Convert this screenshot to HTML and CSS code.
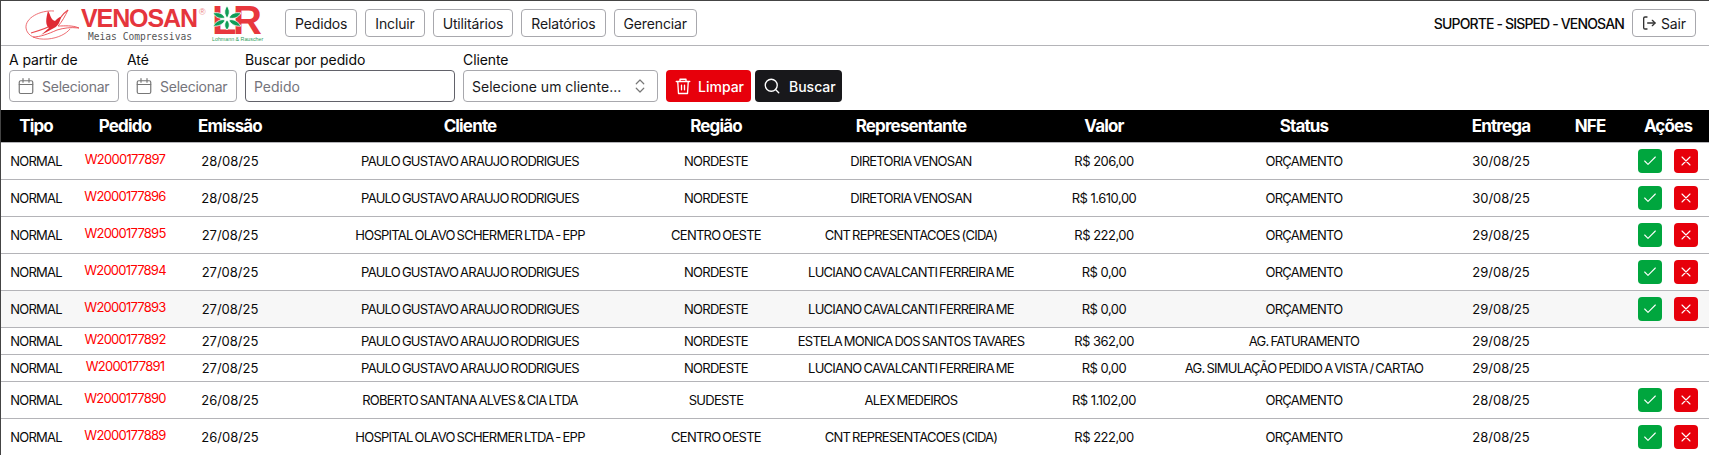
FILE: index.html
```html
<!DOCTYPE html>
<html lang="pt-BR">
<head>
    <meta charset="UTF-8">
    <title>Pedidos</title>
    <link rel="stylesheet" href="styles.css">
</head>
<body>
    <header class="topbar">
        <div class="logo-venosan">
            <svg class="bird" width="56" height="36" viewBox="0 0 56 36" fill="none" stroke="#ea4a50">
                <path d="M2 22 C1 12 16 4 30 5 M2 22 C3 30 12 34 24 33 C34 32 42 28 46 23" stroke-width="0.8"/>
                <path d="M7 27 C14 25 24 22 32 17 C36 13 38 8 44 4" stroke-width="1.2"/>
                <path d="M44 4 C41 10 38 16 34 20 C41 20 48 19 55 22 C46 21 40 22 33 24 C24 28 16 31 9 31" stroke-width="0.9"/>
                <path d="M24 5 C27 9 26 13 31 15 C33 13 35 11 37 11 C36 16 34 20 30 22 L17 29 L25 22 C21 19 22 12 24 5 Z" fill="#df2a33" stroke="none"/>
            </svg>
            <div class="logo-text">
                <span class="logo-name">VENOSAN<sup>®</sup></span>
                <span class="logo-sub">Meias Compressivas</span>
            </div>
        </div>
        <div class="logo-lr">
            <div class="lr-letters"><span class="lr-l">L</span><span>R</span></div>
            <span class="lr-small">Lohmann &amp; Rauscher</span>
            <svg class="lr-leaves" width="30" height="26" viewBox="0 0 30 26" fill="#0f9d58" stroke="#fff" stroke-width="0.8">
                <path d="M1 8 C6 7 11 8 13 13 C8 14 4 13 1 8 Z"/>
                <path d="M1 21 C5 15 10 14 13 15 C12 19 6 22 1 21 Z"/>
                <path d="M29 8 C24 7 19 8 17 13 C22 14 26 13 29 8 Z"/>
                <path d="M29 21 C25 15 20 14 17 15 C18 19 24 22 29 21 Z"/>
                <path d="M15 1 C12 5 12 9 15 13 C18 9 18 5 15 1 Z"/>
                <path d="M15 25 C12 22 12 18 15 15 C18 18 18 22 15 25 Z"/>
            </svg>
        </div>
        <nav class="menu">
            <button class="btn-outline">Pedidos</button>
            <button class="btn-outline">Incluir</button>
            <button class="btn-outline">Utilitários</button>
            <button class="btn-outline">Relatórios</button>
            <button class="btn-outline">Gerenciar</button>
        </nav>
        <div class="user">
            <span class="user-name">SUPORTE - SISPED - VENOSAN</span>
            <button class="btn-outline btn-sair">
                <svg width="16" height="16" viewBox="0 0 24 24" fill="none" stroke="#333" stroke-width="2" stroke-linecap="round" stroke-linejoin="round"><path d="M9 3H6a2 2 0 0 0-2 2v14a2 2 0 0 0 2 2h3"/><path d="M10 12h11"/><path d="M17 8l4 4-4 4"/></svg>
                Sair
            </button>
        </div>
    </header>

    <section class="filters">
        <div class="field">
            <label>A partir de</label>
            <div class="input date">
                <svg width="18" height="18" viewBox="0 0 24 24" fill="none" stroke="#777" stroke-width="1.6" stroke-linecap="round"><rect x="3" y="5" width="18" height="17" rx="2"/><path d="M8 2v5M16 2v5M3 10h18"/></svg>
                <span>Selecionar</span>
            </div>
        </div>
        <div class="field">
            <label>Até</label>
            <div class="input date">
                <svg width="18" height="18" viewBox="0 0 24 24" fill="none" stroke="#777" stroke-width="1.6" stroke-linecap="round"><rect x="3" y="5" width="18" height="17" rx="2"/><path d="M8 2v5M16 2v5M3 10h18"/></svg>
                <span>Selecionar</span>
            </div>
        </div>
        <div class="field">
            <label>Buscar por pedido</label>
            <div class="input pedido"><span>Pedido</span></div>
        </div>
        <div class="field">
            <label>Cliente</label>
            <div class="input cliente">
                <span>Selecione um cliente...</span>
                <svg width="18" height="18" viewBox="0 0 24 24" fill="none" stroke="#777" stroke-width="1.6" stroke-linecap="round" stroke-linejoin="round"><path d="M7 9l5-5 5 5M7 15l5 5 5-5"/></svg>
            </div>
        </div>
        <button class="btn-action red">
            <svg width="18" height="18" viewBox="0 0 24 24" fill="none" stroke="#fff" stroke-width="1.8" stroke-linecap="round" stroke-linejoin="round"><path d="M3 6h18M8 6V3h8v3M5 6l1 16h12l1-16M10 11v6M14 11v6"/></svg>
            Limpar
        </button>
        <button class="btn-action dark">
            <svg width="18" height="18" viewBox="0 0 24 24" fill="none" stroke="#fff" stroke-width="1.8" stroke-linecap="round"><circle cx="11" cy="11" r="8"/><path d="M21 21l-4.3-4.3"/></svg>
            Buscar
        </button>
    </section>

    <table class="grid">
        <colgroup>
            <col class="c-tipo"><col class="c-pedido"><col class="c-emissao"><col class="c-cliente"><col class="c-regiao"><col class="c-rep"><col class="c-valor"><col class="c-status"><col class="c-entrega"><col class="c-nfe"><col class="c-acoes">
        </colgroup>
        <thead>
            <tr><th>Tipo</th><th>Pedido</th><th>Emissão</th><th>Cliente</th><th>Região</th><th>Representante</th><th>Valor</th><th>Status</th><th>Entrega</th><th>NFE</th><th>Ações</th></tr>
        </thead>
        <tbody id="rows"></tbody>
    </table>

    <script src="script.js"></script>
</body>
</html>
```

FILE: script.js
```js
const pedidos = [
    ["W2000177897", "28/08/25", "PAULO GUSTAVO ARAUJO RODRIGUES", "NORDESTE", "DIRETORIA VENOSAN", "R$ 206,00", "ORÇAMENTO", "30/08/25", true],
    ["W2000177896", "28/08/25", "PAULO GUSTAVO ARAUJO RODRIGUES", "NORDESTE", "DIRETORIA VENOSAN", "R$ 1.610,00", "ORÇAMENTO", "30/08/25", true],
    ["W2000177895", "27/08/25", "HOSPITAL OLAVO SCHERMER LTDA - EPP", "CENTRO OESTE", "CNT REPRESENTACOES (CIDA)", "R$ 222,00", "ORÇAMENTO", "29/08/25", true],
    ["W2000177894", "27/08/25", "PAULO GUSTAVO ARAUJO RODRIGUES", "NORDESTE", "LUCIANO CAVALCANTI FERREIRA ME", "R$ 0,00", "ORÇAMENTO", "29/08/25", true],
    ["W2000177893", "27/08/25", "PAULO GUSTAVO ARAUJO RODRIGUES", "NORDESTE", "LUCIANO CAVALCANTI FERREIRA ME", "R$ 0,00", "ORÇAMENTO", "29/08/25", true],
    ["W2000177892", "27/08/25", "PAULO GUSTAVO ARAUJO RODRIGUES", "NORDESTE", "ESTELA MONICA DOS SANTOS TAVARES", "R$ 362,00", "AG. FATURAMENTO", "29/08/25", false],
    ["W2000177891", "27/08/25", "PAULO GUSTAVO ARAUJO RODRIGUES", "NORDESTE", "LUCIANO CAVALCANTI FERREIRA ME", "R$ 0,00", "AG. SIMULAÇÃO PEDIDO A VISTA / CARTAO", "29/08/25", false],
    ["W2000177890", "26/08/25", "ROBERTO SANTANA ALVES & CIA LTDA", "SUDESTE", "ALEX MEDEIROS", "R$ 1.102,00", "ORÇAMENTO", "28/08/25", true],
    ["W2000177889", "26/08/25", "HOSPITAL OLAVO SCHERMER LTDA - EPP", "CENTRO OESTE", "CNT REPRESENTACOES (CIDA)", "R$ 222,00", "ORÇAMENTO", "28/08/25", true]
];

const iconOk = '<svg width="16" height="16" viewBox="0 0 24 24" fill="none" stroke="#fff" stroke-width="1.6" stroke-linecap="round" stroke-linejoin="round"><path d="M20 6L9 17l-5-5"/></svg>';
const iconNo = '<svg width="16" height="16" viewBox="0 0 24 24" fill="none" stroke="#fff" stroke-width="1.6" stroke-linecap="round" stroke-linejoin="round"><path d="M18 6L6 18M6 6l12 12"/></svg>';

let html = "";
pedidos.forEach(function (p, i) {
    let acoes = "";
    if (p[8]) {
        acoes = '<div class="acoes"><button class="mini green">' + iconOk + '</button><button class="mini red">' + iconNo + '</button></div>';
    }
    html += '<tr class="' + (i === 4 ? "hover" : "") + '">'
        + "<td>NORMAL</td>"
        + '<td><a class="link">' + p[0] + "</a></td>"
        + "<td class=\"data\">" + p[1] + "</td>"
        + "<td>" + p[2].replace("&", "&amp;") + "</td>"
        + "<td>" + p[3] + "</td>"
        + "<td>" + p[4] + "</td>"
        + "<td class=\"valor\">" + p[5] + "</td>"
        + "<td>" + p[6] + "</td>"
        + "<td class=\"data\">" + p[7] + "</td>"
        + "<td></td>"
        + "<td>" + acoes + "</td>"
        + "</tr>";
});
document.getElementById("rows").innerHTML = html;
```

FILE: styles.css
```css
* {
    box-sizing: border-box;
}

body {
    margin: 0;
    font-family: Inter, "Noto Sans", sans-serif;
    color: #0a0a0a;
    background: #fff;
    border-top: 1px solid #444;
    border-left: 1px solid #444;
}

button {
    font-family: inherit;
    cursor: pointer;
}

svg {
    flex-shrink: 0;
}

.topbar {
    height: 45px;
    display: flex;
    align-items: center;
    padding: 0 13px 0 23px;
    border-bottom: 1px solid #b4b4b8;
}

.logo-venosan {
    display: flex;
    align-items: flex-start;
    width: 188px;
    height: 40px;
    padding-top: 3px;
}

.logo-text {
    display: flex;
    flex-direction: column;
    align-items: flex-start;
    margin-left: 1px;
}

.logo-name {
    font-family: "Liberation Sans", sans-serif;
    font-weight: 700;
    font-size: 25px;
    line-height: 25px;
    letter-spacing: -1.1px;
    color: #e5353c;
    white-space: nowrap;
}

.logo-name sup {
    font-size: 9px;
    font-weight: 400;
    line-height: 0;
    letter-spacing: 0;
    vertical-align: 12px;
    margin-left: 2px;
    color: #e88;
}

.logo-sub {
    font-family: "DejaVu Sans Mono", monospace;
    font-size: 9.6px;
    line-height: 11px;
    color: #555;
    margin-left: 7px;
    white-space: nowrap;
}

.logo-lr {
    position: relative;
    width: 50px;
    height: 36px;
    padding-top: 1px;
    margin-right: 23px;
}

.lr-letters {
    display: flex;
    height: 29px;
    font-family: "Liberation Sans", sans-serif;
    font-weight: 700;
    font-size: 40px;
    line-height: 29px;
    color: #e8373d;
}

.lr-l {
    width: 21px;
}

.lr-small {
    display: block;
    margin-top: 2px;
    font-family: "Liberation Sans", sans-serif;
    font-size: 5.3px;
    line-height: 5px;
    color: #2a9d5a;
    white-space: nowrap;
}

.lr-leaves {
    position: absolute;
    top: 0;
    left: 0;
}

.menu {
    display: flex;
    gap: 8px;
}

.btn-outline {
    height: 28px;
    padding: 0 9px;
    background: #fff;
    border: 1px solid #a8a8ad;
    border-radius: 4px;
    font-size: 14px;
    letter-spacing: -0.15px;
    color: #18181b;
    display: flex;
    align-items: center;
    gap: 4px;
}

.user {
    margin-left: auto;
    display: flex;
    align-items: center;
    gap: 8px;
}

.user-name {
    font-size: 14px;
    font-weight: 500;
    letter-spacing: -0.85px;
}

.btn-sair {
    width: 64px;
    padding: 0 8px;
}

.filters {
    display: flex;
    align-items: flex-end;
    gap: 8px;
    padding: 0 8px 8px;
    height: 64px;
}

.field {
    display: flex;
    flex-direction: column;
    gap: 2px;
}

.field label {
    font-size: 14px;
    line-height: 17px;
    letter-spacing: -0.1px;
}

.input {
    height: 32px;
    border: 1px solid #a8a8ad;
    border-radius: 4px;
    display: flex;
    align-items: center;
    font-size: 14px;
    color: #74747b;
    padding: 0 8px;
}

.date {
    width: 110px;
    padding: 0 7px;
    gap: 7px;
    letter-spacing: -0.25px;
}

.pedido {
    width: 210px;
    border-color: #62626a;
}

.cliente {
    width: 195px;
    color: #18181b;
    justify-content: space-between;
}

.btn-action {
    height: 32px;
    border: none;
    border-radius: 4px;
    color: #fff;
    font-size: 14px;
    font-weight: 500;
    display: flex;
    align-items: center;
    gap: 8px;
    padding: 0 8px;
}

.btn-action.red {
    width: 85px;
    gap: 6px;
    background: #e7000b;
}

.btn-action.dark {
    width: 87px;
    background: #18181b;
    margin-left: -4px;
}

.grid {
    width: 1708px;
    table-layout: fixed;
    border-collapse: collapse;
}

.c-tipo { width: 70px; }
.c-pedido { width: 108px; }
.c-emissao { width: 102px; }
.c-cliente { width: 378px; }
.c-regiao { width: 114px; }
.c-rep { width: 276px; }
.c-valor { width: 110px; }
.c-status { width: 290px; }
.c-entrega { width: 104px; }
.c-nfe { width: 74px; }
.c-acoes { width: 82px; }

.grid th {
    height: 32px;
    padding: 0;
    background: #000;
    color: #fff;
    font-size: 17px;
    font-weight: 700;
    letter-spacing: -0.85px;
    text-align: center;
}

.grid td {
    padding: 0;
    font-size: 13px;
    letter-spacing: -0.75px;
    word-spacing: -1px;
    text-align: center;
    color: #0a0a0a;
    border-top: 1px solid #b4b4b8;
    height: 27px;
}

.grid td.data {
    letter-spacing: 0;
}

.grid td.valor {
    letter-spacing: -0.5px;
    word-spacing: 0;
}

.grid tr.hover td {
    background: #f7f7f7;
}

.link {
    display: inline-block;
    padding-bottom: 4px;
    color: #f00;
}

.acoes {
    display: flex;
    justify-content: center;
    gap: 12px;
    padding: 6px 0;
}

.mini {
    width: 24px;
    height: 24px;
    padding: 0;
    border: none;
    border-radius: 4px;
    display: flex;
    align-items: center;
    justify-content: center;
}

.mini.green {
    background: #00a63e;
}

.mini.red {
    background: #e7000b;
}
```
